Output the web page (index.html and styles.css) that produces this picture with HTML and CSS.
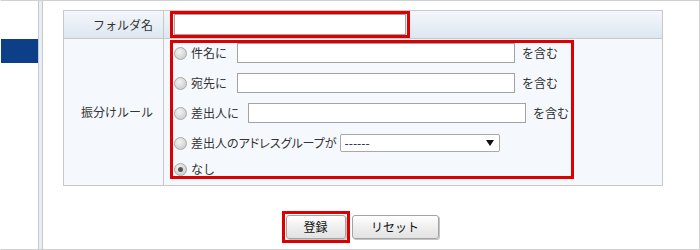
FILE: index.html
```html
<!DOCTYPE html>
<html lang="ja">
<head>
<meta charset="utf-8">
<title>振分けルール</title>
<link rel="stylesheet" href="styles.css">
</head>
<body>
<div class="frame">
  <aside class="side"><div class="side-active"></div></aside>
  <div class="divider"></div>
  <main class="main">
    <div class="form">
      <div class="label label-head">フォルダ名</div>
      <div class="value value-head">
        <div class="mark mark-name"><input class="text text-name" type="text"></div>
      </div>
      <div class="label label-rule">振分けルール</div>
      <div class="value value-rule">
        <div class="mark mark-rules">
          <label class="opt"><input class="radio" type="radio" name="r"><span class="opt-text">件名に</span><input class="text text-rule" type="text"><span class="suffix">を含む</span></label>
          <label class="opt"><input class="radio" type="radio" name="r"><span class="opt-text">宛先に</span><input class="text text-rule" type="text"><span class="suffix">を含む</span></label>
          <label class="opt"><input class="radio" type="radio" name="r"><span class="opt-text">差出人に</span><input class="text text-rule text-from" type="text"><span class="suffix">を含む</span></label>
          <label class="opt"><input class="radio" type="radio" name="r"><span class="opt-text opt-group">差出人のアドレスグループが</span><span class="select-wrap"><select class="select"><option>------</option></select></span></label>
          <label class="opt opt-none"><input class="radio" type="radio" name="r" checked><span class="opt-text">なし</span></label>
        </div>
      </div>
    </div>
    <div class="buttons">
      <span class="mark mark-btn"><button class="btn btn-submit" type="button">登録</button></span>
      <button class="btn btn-reset" type="button">リセット</button>
    </div>
  </main>
</div>
</body>
</html>
```
FILE: styles.css
```css
* { box-sizing: border-box; }
html, body { margin: 0; padding: 0; background: #fff; }
body {
  font-family: "Noto Sans CJK JP", "Noto Sans", sans-serif;
  font-size: 12px;
  color: #333;
}
.frame {
  width: 700px;
  height: 250px;
  display: flex;
  border-top: 1px solid #d0d0d0;
  border-right: 1px solid #d0d0d0;
  border-bottom: 1px solid #d0d0d0;
  border-left: 1px solid #fff;
  background: #fff;
}
.side {
  width: 37px;
  padding-top: 38px;
  flex: none;
}
.side-active {
  height: 24px;
  background: #0c3f88;
}
.divider {
  width: 5px;
  flex: none;
  background: #e6eef6;
  border-left: 1px solid #c8c8c8;
  border-right: 1px solid #c8c8c8;
}
.main {
  flex: 1;
  padding: 9px 0 0 20px;
}
.form {
  width: 600px;
  display: grid;
  grid-template-columns: 100px 498px;
  grid-template-rows: 28px 146px;
  border: 1px solid #c8c8c8;
}
.label {
  border-right: 1px solid #c8c8c8;
  display: flex;
  align-items: center;
  justify-content: flex-end;
  padding-right: 10px;
  line-height: 1;
}
.label-head, .value-head {
  border-bottom: 1px solid #c8c8c8;
  background: linear-gradient(#f4f7fb, #dde7f0);
}
.label-rule, .value-rule {
  background: #f5f8fd;
}
.value-head { padding-left: 6px; }
.mark { border: 3px solid #dd0000; }
.mark-name {
  width: 240px;
  height: 27px;
  padding: 0 1px;
  display: flex;
  align-items: center;
}
.text {
  border: 1px solid #a3a3a3;
  background: #fff;
  margin: 0;
  padding: 0 3px;
  font: inherit;
  outline: none;
}
.text-name { width: 233px; height: 21px; }
.value-rule { padding: 1px 0 0 6px; }
.mark-rules {
  width: 404px;
  height: 139px;
  padding: 0 0 0 1px;
  display: flex;
  flex-direction: column;
  gap: 10px;
}
.opt {
  height: 20px;
  display: flex;
  align-items: center;
  line-height: 1;
  color: #333;
}
.opt-none { height: 12px; }
.radio {
  appearance: none;
  -webkit-appearance: none;
  width: 13px;
  height: 13px;
  margin: 0 4px 0 0;
  border-radius: 50%;
  border: 1px solid #a9a9a9;
  background: radial-gradient(circle at 40% 35%, #f4f4f4, #d2d2d2 70%);
  flex: none;
  display: flex;
  align-items: center;
  justify-content: center;
}
.radio:checked::after {
  content: "";
  width: 5px;
  height: 5px;
  border-radius: 50%;
  background: #555;
}
.text-rule { width: 278px; height: 20px; margin-left: 10px; }
.text-from { margin-left: 9px; }
.suffix { margin-left: 7px; }
.opt-group { font-feature-settings: "palt"; }
.select-wrap {
  position: relative;
  margin-left: 3px;
  display: flex;
}
.select {
  appearance: none;
  -webkit-appearance: none;
  width: 160px;
  height: 18px;
  border: 1px solid #a8a8a8;
  border-radius: 2px;
  background: #fff;
  font: inherit;
  font-size: 12px;
  line-height: 1;
  color: #0d1d55;
  padding: 0 0 0 4px;
  margin: 0;
}
.select-wrap::after {
  content: "";
  position: absolute;
  right: 6px;
  top: 6px;
  border-left: 4px solid transparent;
  border-right: 4px solid transparent;
  border-top: 6px solid #111;
  pointer-events: none;
}
.buttons {
  width: 600px;
  margin-top: 25px;
  padding-right: 6px;
  display: flex;
  align-items: center;
  justify-content: center;
  gap: 2px;
}
.mark-btn {
  display: flex;
  padding: 1px;
}
.btn {
  height: 24px;
  border: 1px solid #a4a4a4;
  border-radius: 3px;
  background: linear-gradient(#ffffff, #ececec 60%, #e2e2e2);
  box-shadow: 1px 1px 0 #c4c4c4;
  font: inherit;
  font-size: 12px;
  color: #111;
  line-height: 1;
  padding: 0;
}
.btn-submit { width: 60px; }
.btn-reset { width: 87px; }
```
